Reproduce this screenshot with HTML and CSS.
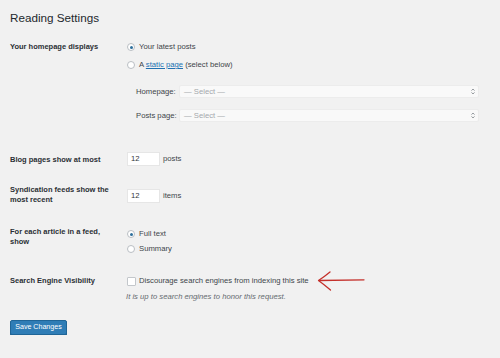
FILE: index.html
```html
<!DOCTYPE html>
<html lang="en">
<head>
<meta charset="utf-8">
<title>Reading Settings</title>
<link rel="stylesheet" href="styles.css">
</head>
<body>
<div class="wrap">
  <h1 class="title">Reading Settings</h1>

  <div class="row row-home">
    <div class="label">Your homepage displays</div>
    <div class="field">
      <div class="option"><span class="radio checked"></span><span>Your latest posts</span></div>
      <div class="option option-second"><span class="radio"></span><span>A <a class="link" href="#">static page</a> (select below)</span></div>
      <div class="page-select page-select-first">
        <span class="select-label">Homepage:</span>
        <div class="select"><span>— Select —</span>
          <svg class="select-arrow" width="4" height="7" viewBox="0 0 4 7"><path d="M0.5 2.6 L2 1 L3.5 2.6 M0.5 4.4 L2 6 L3.5 4.4" fill="none" stroke="#8a8f94" stroke-width="0.9"/></svg>
        </div>
      </div>
      <div class="page-select page-select-second">
        <span class="select-label">Posts page:</span>
        <div class="select"><span>— Select —</span>
          <svg class="select-arrow" width="4" height="7" viewBox="0 0 4 7"><path d="M0.5 2.6 L2 1 L3.5 2.6 M0.5 4.4 L2 6 L3.5 4.4" fill="none" stroke="#8a8f94" stroke-width="0.9"/></svg>
        </div>
      </div>
    </div>
  </div>

  <div class="row row-blog">
    <div class="label label-offset">Blog pages show at most</div>
    <div class="field field-inline">
      <div class="num">12</div><span class="unit">posts</span>
    </div>
  </div>

  <div class="row row-synd">
    <div class="label">Syndication feeds show the most recent</div>
    <div class="field field-inline field-drop">
      <div class="num">12</div><span class="unit">items</span>
    </div>
  </div>

  <div class="row row-feed">
    <div class="label">For each article in a feed, show</div>
    <div class="field field-feed">
      <div class="option"><span class="radio checked"></span><span>Full text</span></div>
      <div class="option option-summary"><span class="radio"></span><span>Summary</span></div>
    </div>
  </div>

  <div class="row row-search">
    <div class="label">Search Engine Visibility</div>
    <div class="field">
      <div class="option option-check"><span class="checkbox"></span><span>Discourage search engines from indexing this site</span>
        <svg class="annot-arrow" width="50" height="22" viewBox="0 0 50 22"><path d="M2 10.5 L47 9.8" fill="none" stroke="#c4302b" stroke-width="1.3" stroke-linecap="round"/><path d="M13 2 Q7 7 1.5 10.5 Q7 14.5 13.5 20" fill="none" stroke="#c4302b" stroke-width="1.3" stroke-linecap="round" stroke-linejoin="round"/></svg>
      </div>
      <p class="desc">It is up to search engines to honor this request.</p>
    </div>
  </div>

  <button class="btn" type="button">Save Changes</button>
</div>
</body>
</html>
```

FILE: styles.css
```css
html, body {
  margin: 0;
  padding: 0;
  background: #f1f1f1;
}
body {
  font-family: "Liberation Sans", Arial, sans-serif;
  font-size: 7.7px;
  line-height: 10px;
  color: #40454a;
}
.wrap {
  padding: 11px 21px 0 10px;
}
.title {
  margin: 0;
  font-size: 11.7px;
  line-height: 14px;
  font-weight: 400;
  color: #23282d;
}
.row {
  display: grid;
  grid-template-columns: 117px 1fr;
  align-items: start;
}
.label {
  font-size: 7.5px;
  font-weight: 700;
  color: #2a2f34;
  width: 110px;
}
.label-offset {
  padding-top: 3px;
}
.row-home { margin-top: 17px; }
.row-blog { margin-top: 30px; }
.row-synd { margin-top: 19px; }
.row-feed { margin-top: 22px; }
.row-search { margin-top: 22px; }

.option {
  display: flex;
  align-items: center;
  height: 10px;
  gap: 4px;
}
.option-second { margin-top: 8px; }
.option-summary { margin-top: 5px; }
.field-feed { padding-top: 2px; }

.radio {
  box-sizing: border-box;
  width: 8px;
  height: 8px;
  border: 1px solid #b9bec3;
  border-radius: 50%;
  background: #fff;
  display: flex;
  align-items: center;
  justify-content: center;
  flex: none;
}
.radio.checked::before {
  content: "";
  width: 3px;
  height: 3px;
  border-radius: 50%;
  background: #2d6f9c;
}
.checkbox {
  box-sizing: border-box;
  width: 9px;
  height: 9px;
  border: 1px solid #c3c7cb;
  border-radius: 1px;
  background: #fff;
  flex: none;
}
.option-check { gap: 3px; }
.annot-arrow {
  flex: none;
  margin-left: 5px;
}
.link {
  color: #2271b1;
  text-decoration: underline;
}
.page-select {
  display: flex;
  align-items: center;
  padding-left: 9px;
  height: 13px;
}
.page-select-first { margin-top: 15px; }
.page-select-second { margin-top: 11px; }
.select-label {
  flex: none;
  width: 43px;
  color: #40454a;
}
.select {
  flex: 1;
  box-sizing: border-box;
  height: 13px;
  display: flex;
  align-items: center;
  justify-content: space-between;
  padding: 0 3px 0 4px;
  background: #f9f9f9;
  border: 1px solid #ececec;
  border-radius: 2px;
  color: #a4a8ac;
}
.select-arrow { flex: none; }

.field-inline {
  display: flex;
  align-items: center;
  gap: 3px;
}
.field-drop { margin-top: 4px; }
.num {
  box-sizing: border-box;
  width: 33px;
  height: 14px;
  padding-left: 3px;
  display: flex;
  align-items: center;
  background: #fff;
  border: 1px solid #e6e6e6;
  color: #32373c;
}
.unit { color: #40454a; }
.desc {
  margin: 6px 0 0 -1px;
  font-style: italic;
  color: #666b70;
}
.btn {
  display: block;
  margin-top: 18px;
  box-sizing: border-box;
  width: 57px;
  height: 15px;
  padding: 0;
  font-family: "Liberation Sans", Arial, sans-serif;
  font-size: 7.1px;
  line-height: 13px;
  color: #fff;
  background: #2f7db6;
  border: 1px solid #1f6597;
  border-radius: 2px;
  box-shadow: 0 1px 0 #1d5d8a;
}
```
